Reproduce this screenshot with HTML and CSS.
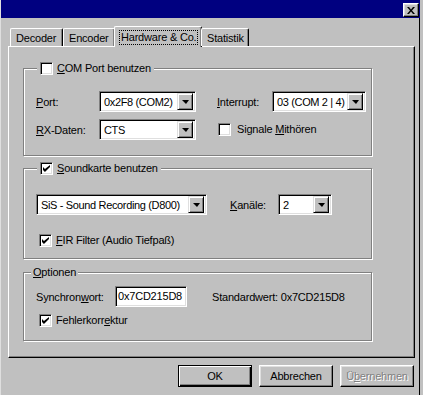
FILE: index.html
```html
<!DOCTYPE html>
<html lang="de">
<head>
  <meta charset="UTF-8" />
  <title>Hardware &amp; Co.</title>
  <link rel="stylesheet" href="styles.css">
</head>
<body>
  <div class="window">
    <div class="titlebar">
      <button class="close" aria-label="Schließen">
        <svg width="8" height="7" viewBox="0 0 8 7"><path d="M0 0h2l2 2.5 2-2.5h2l-3 3.5 3 3.5h-2l-2-2.5-2 2.5h-2l3-3.5z" fill="#000"/></svg>
      </button>
    </div>

    <div class="tabstrip">
      <div class="tab">Decoder</div>
      <div class="tab">Encoder</div>
      <div class="tab active"><span class="focus">Hardware &amp; Co.</span></div>
      <div class="tab">Statistik</div>
    </div>

    <div class="panel">
      <div class="group g-com">
        <label class="legend"><span class="check"></span><span><u>C</u>OM Port benutzen</span></label>
        <div class="row">
          <span class="lbl w63"><u>P</u>ort:</span>
          <div class="combo w97"><span class="val">0x2F8 (COM2)</span><span class="drop"></span></div>
          <span class="lbl lbl-int"><u>I</u>nterrupt:</span>
          <div class="combo w94"><span class="val">03 (COM 2 | 4)</span><span class="drop"></span></div>
        </div>
        <div class="row">
          <span class="lbl w63"><u>R</u>X-Daten:</span>
          <div class="combo w97"><span class="val">CTS</span><span class="drop"></span></div>
          <label class="checkline mithoeren"><span class="check"></span><span>Signale <u>M</u>ithören</span></label>
        </div>
      </div>

      <div class="group g-sound">
        <label class="legend"><span class="check on"></span><span><u>S</u>oundkarte benutzen</span></label>
        <div class="row">
          <div class="combo w171"><span class="val">SiS - Sound Recording (D800)</span><span class="drop"></span></div>
          <span class="lbl lbl-kan"><u>K</u>anäle:</span>
          <div class="combo w54"><span class="val">2</span><span class="drop"></span></div>
        </div>
        <label class="checkline fir"><span class="check on"></span><span><u>F</u>IR Filter (Audio Tiefpaß)</span></label>
      </div>

      <div class="group g-opt">
        <span class="text-legend"><u>O</u>ptionen</span>
        <div class="row">
          <span class="lbl w79">Synchron<u>w</u>ort:</span>
          <div class="edit">0x7CD215D8</div>
          <span class="lbl std">Standardwert: 0x7CD215D8</span>
        </div>
        <label class="checkline fehler"><span class="check on"></span><span>Fehlerkorr<u>e</u>ktur</span></label>
      </div>
    </div>

    <div class="buttons">
      <button class="btn default">OK</button>
      <button class="btn">Abbrechen</button>
      <button class="btn disabled">Ü<u>b</u>ernehmen</button>
    </div>
  </div>
</body>
</html>
```

FILE: styles.css
```css
html, body { margin: 0; padding: 0; }
body { background: #c0c0c0; font-family: "Liberation Sans", Arial, sans-serif; font-size: 11px; letter-spacing: -0.2px; color: #000; }
u { text-decoration: underline; text-underline-offset: 1px; }

.window { width: 420px; height: 395px; border-right: 1px solid #000; border-left: 1px solid #dfdfdf; box-sizing: border-box; position: relative; }

.titlebar { height: 18px; background: #000080; display: flex; justify-content: flex-end; align-items: flex-start; padding: 3px 1px 0 0; box-sizing: border-box; margin-right: -1px; }
.close {
  width: 16px; height: 14px; padding: 0; background: #c0c0c0;
  border: 1px solid; border-color: #fff #000 #000 #fff;
  box-shadow: inset -1px -1px 0 #808080, inset 1px 1px 0 #dfdfdf;
  display: flex; align-items: center; justify-content: center;
}

.tabstrip { display: flex; align-items: flex-end; height: 21px; margin-top: 7px; padding-left: 9px; position: relative; z-index: 2; }
.tab {
  height: 18px; box-sizing: border-box; padding: 3px 5px 0 5px; background: #c0c0c0;
  border-top: 1px solid #fff; border-left: 1px solid #fff; border-right: 1px solid #000;
  border-radius: 2px 2px 0 0; box-shadow: inset -1px 0 0 #808080;
  white-space: nowrap;
}
.tab:nth-child(1) { width: 53px; }
.tab:nth-child(2) { width: 52px; }
.tab:nth-child(4) { width: 48px; }
.tab.active { height: 21px; width: 88px; margin: 0 0 -1px -1px; padding: 3px 3px 0 4px; }
.tab.active + .tab { margin-left: -1px; }
.focus { display: inline-block; border: 1px dotted #000; padding: 0 1px; line-height: 13px; }

.panel {
  margin-left: 7px; width: 407px; height: 312px; box-sizing: border-box;
  border: 1px solid; border-color: #fff #000 #000 #fff;
  box-shadow: inset -1px -1px 0 #808080;
  padding: 21px 0 0 14px;
}

.group {
  position: relative; width: 349px; box-sizing: border-box;
  border: 1px solid #808080; box-shadow: inset 1px 1px 0 #fff, 1px 1px 0 #fff;
}
.g-com { height: 88px; padding: 22px 0 0 12px; }
.g-sound { height: 91px; margin-top: 12px; padding: 25px 0 0 12px; }
.g-opt { height: 69px; margin-top: 13px; padding: 13px 0 0 12px; }

.legend {
  position: absolute; top: -7px; left: 13px; background: #c0c0c0;
  display: flex; align-items: center; gap: 4px; padding: 0 3px; line-height: 13px;
}
.text-legend { position: absolute; top: -7px; left: 7px; background: #c0c0c0; padding: 0 2px; line-height: 13px; }

.row { display: flex; align-items: center; height: 21px; }
.row + .row { margin-top: 7px; }
.lbl { white-space: nowrap; }
.w63 { width: 63px; }
.w79 { width: 79px; }
.lbl-int { width: 55px; margin-left: 21px; }
.lbl-kan { width: 48px; margin-left: 23px; }
.std { margin-left: 25px; }

.combo {
  height: 21px; box-sizing: border-box; background: #fff; display: flex; align-items: center;
  border: 1px solid; border-color: #808080 #fff #fff #808080;
  box-shadow: inset 1px 1px 0 #000, inset -1px -1px 0 #dfdfdf;
  padding: 2px; 
}
.w97 { width: 97px; }
.w94 { width: 94px; }
.w171 { width: 171px; }
.w54 { width: 54px; }
.val { flex: 1; padding-left: 2px; white-space: nowrap; overflow: hidden; margin-top: 1px; letter-spacing: -0.35px; }
.drop {
  width: 16px; height: 17px; box-sizing: border-box; background: #c0c0c0; flex: none; position: relative;
  border: 1px solid; border-color: #dfdfdf #000 #000 #dfdfdf;
  box-shadow: inset 1px 1px 0 #fff, inset -1px -1px 0 #808080;
  display: flex; align-items: center; justify-content: center;
}
.drop::after { content: ""; border-left: 4px solid transparent; border-right: 3px solid transparent; border-top: 4px solid #000; }

.edit {
  width: 72px; height: 21px; box-sizing: border-box; background: #fff; padding: 3px 0 0 2px;
  border: 1px solid; border-color: #808080 #fff #fff #808080;
  box-shadow: inset 1px 1px 0 #000, inset -1px -1px 0 #dfdfdf;
}

.check {
  width: 13px; height: 13px; box-sizing: border-box; background: #fff; flex: none; display: inline-block;
  border: 1px solid; border-color: #808080 #fff #fff #808080;
  box-shadow: inset 1px 1px 0 #000, inset -1px -1px 0 #dfdfdf;
  position: relative;
}
.check.on::after {
  content: ""; position: absolute; left: 2px; top: 2px; width: 7px; height: 7px;
  background: linear-gradient(#000, #000);
  clip-path: polygon(0 28%, 0 71%, 28% 100%, 100% 28%, 100% 0, 28% 57%);
}

.checkline { display: flex; align-items: center; gap: 4px; line-height: 13px; }
.mithoeren { margin-left: 22px; gap: 6px; }
.fir { margin: 19px 0 0 3px; }
.fehler { margin: 7px 0 0 3px; }

.buttons { display: flex; justify-content: flex-end; gap: 7px; margin-top: 7px; padding-right: 5px; }
.btn {
  width: 74px; height: 22px; box-sizing: border-box; padding: 0; background: #c0c0c0;
  font-family: inherit; font-size: 11px; letter-spacing: inherit; color: #000;
  border: 1px solid; border-color: #fff #000 #000 #fff;
  box-shadow: inset -1px -1px 0 #808080, inset 1px 1px 0 #dfdfdf;
}
.btn.default { border: 1px solid #000; box-shadow: inset 1px 1px 0 #fff, inset -1px -1px 0 #000, inset -2px -2px 0 #808080; }
.btn.disabled { color: #808080; text-shadow: 1px 1px 0 #fff; }
```
